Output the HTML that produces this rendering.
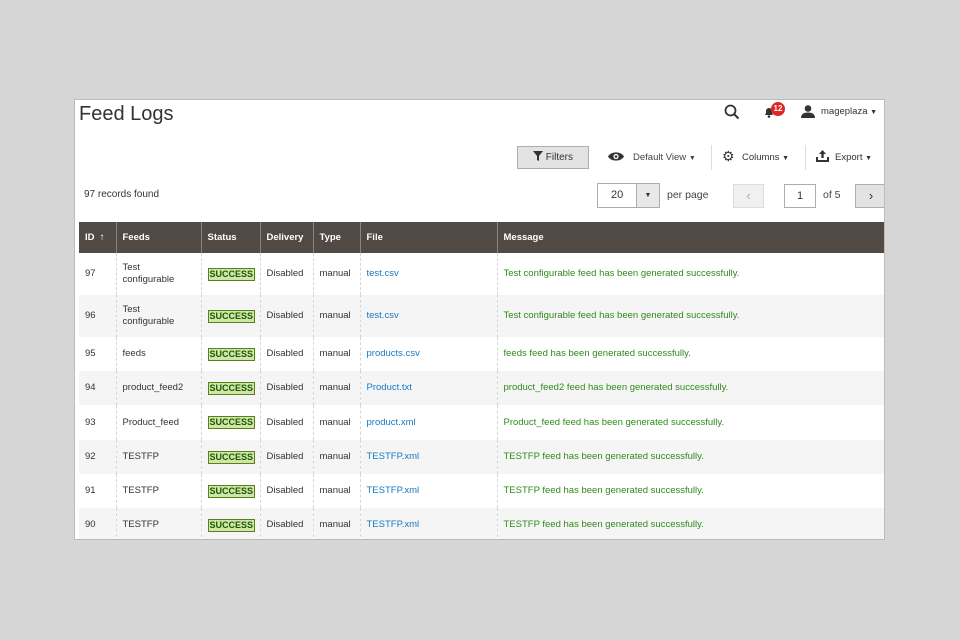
<!DOCTYPE html>
<html><head><style>
body{margin:0;width:960px;height:640px;background:#d6d6d6;font-family:"Liberation Sans",sans-serif;position:relative;overflow:hidden;color:#333}
.panel{position:absolute;left:74px;top:99px;width:811px;height:441px;background:#fff;border:1px solid #bbb;box-sizing:border-box;overflow:hidden}
.abs{position:absolute}
h1{position:absolute;left:4px;top:3px;margin:0;font-weight:normal;font-size:20px;color:#333}
table{position:absolute;left:4px;top:122px;border-collapse:collapse;font-size:9.5px;width:806px;table-layout:fixed}
th{background:#514943;color:#fff;text-align:left;font-weight:bold;height:31px;padding:0 6px;border-left:1px solid #8a837f;font-size:9.5px}
th:first-child{border-left:none}
td{padding:0 6px;border-left:1px dashed #d6d6d6;color:#333;line-height:12px;white-space:nowrap;overflow:hidden}
td:first-child{border-left:none}
tr.e td{background:#f5f5f5}
.s{display:inline-block;background:#d0e5a9;border:1px solid #5b8116;color:#185b00;font-weight:bold;font-size:9px;padding:0 1px;line-height:11px}
a{color:#1979c3;text-decoration:none}
.m{color:#2f8a1c}
.btn{position:absolute;border:1px solid #adadad;background:#e3e3e3;box-sizing:border-box}
.t{font-size:9.5px;color:#333}
.car{font-size:7px}
</style></head><body>
<div class="panel">
<h1>Feed Logs</h1>
<svg class="abs" style="left:649px;top:4px" width="16" height="16" viewBox="0 0 16 16"><circle cx="6.5" cy="6.5" r="5" fill="none" stroke="#333" stroke-width="1.8"/><path d="M10 10l4.5 4.5" stroke="#333" stroke-width="2"/></svg>
<svg class="abs" style="left:688px;top:6px" width="12" height="12" viewBox="0 0 12 12"><path d="M2 9h8l-1-2V5a3 3 0 0 0-6 0v2z" fill="#333"/><circle cx="6" cy="10.5" r="1.3" fill="#333"/></svg>
<div class="abs" style="left:696px;top:2px;width:14px;height:14px;border-radius:7px;background:#e22626;color:#fff;font-size:8px;font-weight:bold;text-align:center;line-height:14px">12</div>
<svg class="abs" style="left:726px;top:5px" width="14" height="13" viewBox="0 0 14 13"><circle cx="7" cy="3.5" r="3.3" fill="#333"/><path d="M0 13c0-4 3-5.5 7-5.5s7 1.5 7 5.5z" fill="#333"/></svg>
<div class="abs t" style="left:746px;top:6px">mageplaza <span class="car">▼</span></div>
<div class="btn" style="left:442px;top:46px;width:72px;height:23px;font-size:10px;line-height:21px;text-align:center"><svg width="10" height="10" viewBox="0 0 10 10" style="vertical-align:-1px"><path d="M0 0h10L6 5v5L4 9V5z" fill="#333"/></svg> Filters</div>
<svg class="abs" style="left:533px;top:51px" width="16" height="11" viewBox="0 0 16 11"><path d="M0 5.5C3 0 13 0 16 5.5 13 11 3 11 0 5.5z" fill="#333"/><circle cx="8" cy="5.5" r="2.6" fill="#fff"/><circle cx="8" cy="5.5" r="1.3" fill="#333"/></svg>
<div class="abs t" style="left:558px;top:52px;color:#444">Default View <span class="car">▼</span></div>
<div class="abs" style="left:636px;top:45px;width:1px;height:25px;background:#ddd"></div>
<div class="abs" style="left:647px;top:49px;font-size:14px;line-height:14px">⚙</div>
<div class="abs t" style="left:667px;top:52px">Columns <span class="car">▼</span></div>
<div class="abs" style="left:730px;top:45px;width:1px;height:25px;background:#ddd"></div>
<svg class="abs" style="left:741px;top:50px" width="13" height="12" viewBox="0 0 13 12"><path d="M6.5 0L3 4h2.3v4h2.4V4H10z M0 7h2v3h9V7h2v5H0z" fill="#333"/></svg>
<div class="abs t" style="left:760px;top:52px">Export <span class="car">▼</span></div>
<div class="abs" style="left:9px;top:89px;font-size:10px;color:#333">97 records found</div>
<div class="abs" style="left:522px;top:83px;width:63px;height:25px;border:1px solid #adadad;box-sizing:border-box;font-size:11px;line-height:23px"><span style="padding-left:13px">20</span><div style="position:absolute;right:0;top:0;width:22px;height:23px;border-left:1px solid #adadad;background:#e8e8e8;text-align:center;font-size:7px">▼</div></div>
<div class="abs" style="left:592px;top:89px;font-size:10.5px;color:#444">per page</div>
<div class="btn" style="left:658px;top:84px;width:31px;height:24px;background:#f0f0f0;border-color:#ddd;text-align:center;color:#aaa;line-height:22px;font-size:13px">‹</div>
<div class="abs" style="left:709px;top:84px;width:32px;height:24px;border:1px solid #adadad;box-sizing:border-box;text-align:center;font-size:11px;line-height:22px">1</div>
<div class="abs" style="left:748px;top:89px;font-size:10.5px;color:#444">of 5</div>
<div class="btn" style="left:780px;top:84px;width:32px;height:24px;text-align:center;line-height:22px;font-size:13px">›</div>
<table>
<colgroup><col style="width:37px"><col style="width:85px"><col style="width:59px"><col style="width:53px"><col style="width:47px"><col style="width:137px"><col></colgroup>
<tr><th>ID &nbsp;↑</th><th>Feeds</th><th>Status</th><th>Delivery</th><th>Type</th><th>File</th><th>Message</th></tr>
<tr style="height:42px"><td>97</td><td>Test<br>configurable</td><td><span class="s">SUCCESS</span></td><td>Disabled</td><td>manual</td><td><a>test.csv</a></td><td class="m">Test configurable feed has been generated successfully.</td></tr>
<tr class="e" style="height:42px"><td>96</td><td>Test<br>configurable</td><td><span class="s">SUCCESS</span></td><td>Disabled</td><td>manual</td><td><a>test.csv</a></td><td class="m">Test configurable feed has been generated successfully.</td></tr>
<tr style="height:34px"><td>95</td><td>feeds</td><td><span class="s">SUCCESS</span></td><td>Disabled</td><td>manual</td><td><a>products.csv</a></td><td class="m">feeds feed has been generated successfully.</td></tr>
<tr class="e" style="height:34px"><td>94</td><td>product_feed2</td><td><span class="s">SUCCESS</span></td><td>Disabled</td><td>manual</td><td><a>Product.txt</a></td><td class="m">product_feed2 feed has been generated successfully.</td></tr>
<tr style="height:35px"><td>93</td><td>Product_feed</td><td><span class="s">SUCCESS</span></td><td>Disabled</td><td>manual</td><td><a>product.xml</a></td><td class="m">Product_feed feed has been generated successfully.</td></tr>
<tr class="e" style="height:34px"><td>92</td><td>TESTFP</td><td><span class="s">SUCCESS</span></td><td>Disabled</td><td>manual</td><td><a>TESTFP.xml</a></td><td class="m">TESTFP feed has been generated successfully.</td></tr>
<tr style="height:34px"><td>91</td><td>TESTFP</td><td><span class="s">SUCCESS</span></td><td>Disabled</td><td>manual</td><td><a>TESTFP.xml</a></td><td class="m">TESTFP feed has been generated successfully.</td></tr>
<tr class="e" style="height:34px"><td>90</td><td>TESTFP</td><td><span class="s">SUCCESS</span></td><td>Disabled</td><td>manual</td><td><a>TESTFP.xml</a></td><td class="m">TESTFP feed has been generated successfully.</td></tr>
</table>
</div>
</body></html>
